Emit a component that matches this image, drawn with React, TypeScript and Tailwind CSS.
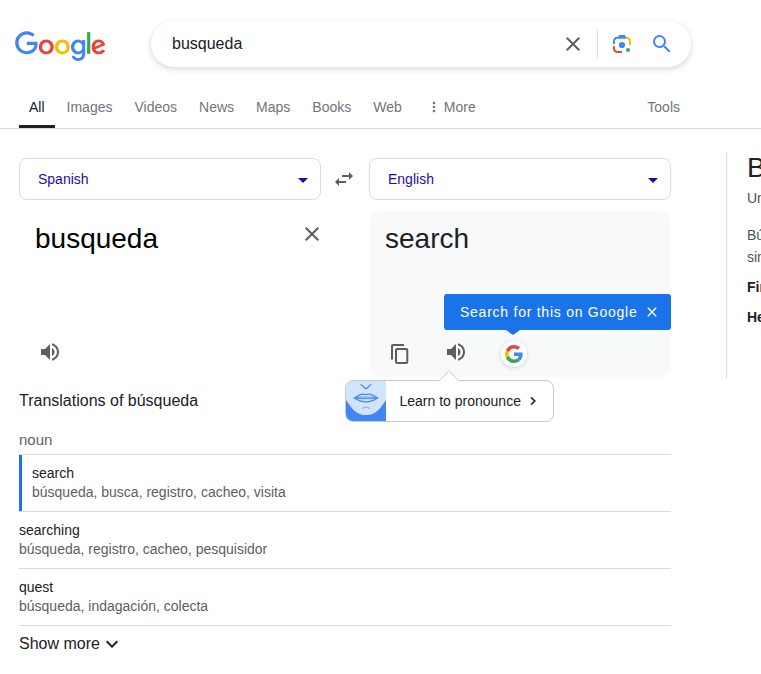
import React from "react";

function Icon({ d, size = 24, className = "" }: { d: string; size?: number; className?: string }) {
  return (
    <svg viewBox="0 0 24 24" width={size} height={size} fill="currentColor" className={`shrink-0 ${className}`}>
      <path d={d} />
    </svg>
  );
}

const CLOSE = "M19 6.41L17.59 5 12 10.59 6.41 5 5 6.41 10.59 12 5 17.59 6.41 19 12 13.41 17.59 19 19 17.59 13.41 12z";
const SEARCH =
  "M15.5 14h-.79l-.28-.27A6.471 6.471 0 0 0 16 9.5 6.5 6.5 0 1 0 9.5 16c1.61 0 3.09-.59 4.23-1.57l.27.28v.79l5 4.99L20.49 19l-4.99-5zm-6 0C7.01 14 5 11.99 5 9.5S7.01 5 9.5 5 14 7.01 14 9.5 11.99 14 9.5 14z";
const SWAP = "M6.99 11L3 15l3.99 4v-3H14v-2H6.99v-3zM21 9l-3.99-4v3H10v2h7.01v3L21 9z";
const VOLUME =
  "M3 9v6h4l5 5V4L7 9H3zm13.5 3c0-1.77-1.02-3.29-2.5-4.03v8.05c1.48-.73 2.5-2.25 2.5-4.02zM14 3.23v2.06c2.89.86 5 3.54 5 6.71s-2.11 5.85-5 6.71v2.06c4.01-.91 7-4.49 7-8.77s-2.99-7.86-7-8.77z";
const MORE =
  "M12 8c1.1 0 2-.9 2-2s-.9-2-2-2-2 .9-2 2 .9 2 2 2zm0 2c-1.1 0-2 .9-2 2s.9 2 2 2 2-.9 2-2-.9-2-2-2zm0 6c-1.1 0-2 .9-2 2s.9 2 2 2 2-.9 2-2-.9-2-2-2z";
const CHEVRON_RIGHT = "M10 6L8.59 7.41 13.17 12l-4.58 4.59L10 18l6-6z";
const CHEVRON_DOWN = "M7.41 8.59L12 13.17l4.59-4.58L18 10l-6 6-6-6z";

function GoogleLogo() {
  return (
    <svg viewBox="0 0 272 92" width={91} height={31} className="shrink-0">
      <path fill="#EA4335" d="M115.75 47.18c0 12.77-9.99 22.18-22.25 22.18s-22.25-9.41-22.25-22.18C71.25 34.32 81.24 25 93.5 25s22.25 9.32 22.25 22.18zm-9.74 0c0-7.98-5.79-13.44-12.51-13.44S80.99 39.2 80.99 47.18c0 7.9 5.79 13.44 12.51 13.44s12.51-5.55 12.51-13.44z" />
      <path fill="#FBBC05" d="M163.75 47.18c0 12.77-9.99 22.18-22.25 22.18s-22.25-9.41-22.25-22.18c0-12.85 9.99-22.18 22.25-22.18s22.25 9.32 22.25 22.18zm-9.74 0c0-7.98-5.79-13.44-12.51-13.44s-12.51 5.46-12.51 13.44c0 7.9 5.79 13.44 12.51 13.44s12.51-5.55 12.51-13.44z" />
      <path fill="#4285F4" d="M209.75 26.34v39.82c0 16.38-9.66 23.07-21.08 23.07-10.75 0-17.22-7.19-19.66-13.07l8.48-3.53c1.51 3.61 5.21 7.87 11.17 7.87 7.31 0 11.84-4.51 11.84-13v-3.19h-.34c-2.18 2.69-6.38 5.04-11.68 5.04-11.09 0-21.25-9.66-21.25-22.09 0-12.52 10.16-22.26 21.25-22.26 5.29 0 9.49 2.35 11.68 4.96h.34v-3.61h9.25zm-8.56 20.92c0-7.81-5.21-13.52-11.84-13.52-6.72 0-12.35 5.71-12.35 13.52 0 7.73 5.63 13.36 12.35 13.36 6.63 0 11.84-5.63 11.84-13.36z" />
      <path fill="#34A853" d="M225 3v65h-9.5V3h9.5z" />
      <path fill="#EA4335" d="M262.02 54.48l7.56 5.04c-2.44 3.61-8.32 9.83-18.48 9.83-12.6 0-22.01-9.74-22.01-22.18 0-13.19 9.49-22.18 20.92-22.18 11.51 0 17.14 9.16 18.98 14.11l1.01 2.52-29.65 12.28c2.27 4.45 5.8 6.72 10.75 6.72 4.96 0 8.4-2.44 10.92-6.14zm-23.27-7.98l19.82-8.23c-1.09-2.77-4.37-4.7-8.23-4.7-4.95 0-11.84 4.37-11.59 12.93z" />
      <path fill="#4285F4" d="M35.29 41.41V32h31.81c.31 1.64.47 3.58.47 5.68 0 7.06-1.93 15.79-8.15 22.01-6.05 6.3-13.78 9.66-24.02 9.66C16.32 69.35.36 53.89.36 34.91.36 15.93 16.32.47 35.3.47c10.5 0 17.98 4.12 23.6 9.49l-6.64 6.64c-4.03-3.78-9.49-6.72-16.97-6.72-13.86 0-24.7 11.17-24.7 25.03 0 13.86 10.84 25.03 24.7 25.03 8.99 0 14.11-3.61 17.39-6.89 2.66-2.66 4.41-6.46 5.1-11.65l-22.49.01z" />
    </svg>
  );
}

function GoogleG() {
  return (
    <svg viewBox="0 0 48 48" width={18} height={18}>
      <path fill="#EA4335" d="M24 9.5c3.54 0 6.71 1.22 9.21 3.6l6.85-6.85C35.9 2.38 30.47 0 24 0 14.62 0 6.51 5.38 2.56 13.22l7.98 6.19C12.43 13.72 17.74 9.5 24 9.5z" />
      <path fill="#4285F4" d="M46.98 24.55c0-1.57-.15-3.09-.38-4.55H24v9.02h12.94c-.58 2.96-2.26 5.48-4.78 7.18l7.73 6c4.51-4.18 7.09-10.36 7.09-17.65z" />
      <path fill="#FBBC05" d="M10.53 28.59c-.48-1.45-.76-2.99-.76-4.59s.27-3.14.76-4.59l-7.98-6.19C.92 16.46 0 20.12 0 24c0 3.88.92 7.54 2.56 10.78l7.97-6.19z" />
      <path fill="#34A853" d="M24 48c6.48 0 11.93-2.13 15.89-5.81l-7.73-6c-2.15 1.45-4.92 2.3-8.16 2.3-6.26 0-11.57-4.22-13.47-9.91l-7.98 6.19C6.51 42.62 14.62 48 24 48z" />
    </svg>
  );
}

function LensIcon() {
  return (
    <svg viewBox="0 0 24 24" width={24} height={24} fill="none" strokeWidth={2} className="shrink-0">
      <path stroke="#4285F4" d="M4 12V9.200A3.500 3.500 0 0 1 7.500 5.700H16" />
      <path fill="#4285F4" d="M7.500 6l1.700-3h5.600L16.500 6z" />
      <path stroke="#FBBC04" d="M16 5.700h.5A3.500 3.500 0 0 1 20 9.200V13" />
      <path stroke="#EA4335" d="M4 14.300v2.200A3.500 3.500 0 0 0 7.500 20H12" />
      <circle cx="12" cy="13" r="3.1" fill="#4285F4" />
      <circle cx="18" cy="18" r="2" fill="#34A853" />
    </svg>
  );
}

function CopyIcon({ className }: { className: string }) {
  return (
    <svg viewBox="0 0 24 24" width={24} height={24} fill="none" stroke="currentColor" strokeWidth={2} className={className}>
      <path d="M4 17.500V4a1 1 0 0 1 1-1H16" />
      <rect x="8" y="7" width="11.300" height="14" rx="1.2" />
    </svg>
  );
}

function Mouth() {
  return (
    <svg viewBox="0 0 40 40" width={40} height={40} fill="none" stroke="#4285F4" strokeWidth={1.2} className="shrink-0">
      <rect width="40" height="40" fill="#D2E3FC" stroke="none" />
      <path d="M0 19C5 26 9 34 20 34S35 26 40 19V40H0z" fill="#4285F4" stroke="none" />
      <path d="M14.500 3.500c2.600 0 3 4.200 5.500 4.200s2.900-4.200 5.500-4.200" />
      <path d="M8.500 17c3-2 6-3.900 8.500-3.900 1.200 0 1.800.400 3 .400s1.800-.400 3-.400c2.500 0 5.500 1.900 8.500 3.900-4 2.800-7 3.900-11.500 3.900S12.500 19.800 8.500 17z" />
      <path d="M8.500 17c4-.800 7-.900 11.500-.900s7.500.100 11.500.900c-4 .700-7 .700-11.500.700s-7.500 0-11.500-.700z" strokeWidth={0.9} />
      <path d="M16.500 27.500c2-1.800 5-1.800 7 0" stroke="#78A9F7" />
    </svg>
  );
}

function Select({ label }: { label: string }) {
  return (
    <div className="flex h-[42px] w-[302px] items-center justify-between rounded-lg border border-[#dadce0] pl-[18px] pr-3 text-sm text-[#1a0dab]">
      <span>{label}</span>
      <span className="mt-0.5 border-x-[5px] border-t-[5px] border-x-transparent border-t-[#1a0dab]" />
    </div>
  );
}

const tabs = ["All", "Images", "Videos", "News", "Maps", "Books", "Web"];
const entries = [
  { word: "search", synonyms: "búsqueda, busca, registro, cacheo, visita" },
  { word: "searching", synonyms: "búsqueda, registro, cacheo, pesquisidor" },
  { word: "quest", synonyms: "búsqueda, indagación, colecta" },
];

export default function App() {
  return (
    <div className="h-[674px] w-[761px] overflow-hidden bg-white font-['Liberation_Sans',Arial,sans-serif] text-[#202124]">
      <header className="flex h-[88px] items-start pl-[15px] pt-[21px]">
        <div className="mr-[45px] mt-2.5">
          <GoogleLogo />
        </div>
        <div className="flex h-[46px] w-[540px] items-center rounded-full bg-white pl-[21px] pr-[17px] shadow-[0_2px_5px_1px_rgba(64,60,67,0.16)]">
          <span className="grow text-base">busqueda</span>
          <Icon d={CLOSE} className="mr-3 text-[#5e5e5e]" />
          <span className="mr-3 h-7 w-px bg-[#dadce0]" />
          <LensIcon />
          <Icon d={SEARCH} className="ml-4 text-[#4285f4]" />
        </div>
      </header>

      <nav className="flex h-[41px] gap-0.5 border-b border-[#dadce0] pl-[19px] text-sm text-[#70757a]">
        {tabs.map((tab, i) => (
          <div
            key={tab}
            className={
              i === 0
                ? "flex items-center border-b-[3px] border-[#202124] px-2.5 text-[#202124]"
                : "flex items-center border-b-[3px] border-transparent px-2.5"
            }
          >
            {tab}
          </div>
        ))}
        <div className="ml-3 flex items-center border-b-[3px] border-transparent">
          <Icon d={MORE} size={16} className="mr-0.5" />
          More
        </div>
        <div className="ml-auto mr-[81px] flex items-center border-b-[3px] border-transparent">Tools</div>
      </nav>

      <div className="flex">
        <main className="ml-[19px] w-[652px] shrink-0 pt-[29px]">
          <div className="flex items-center justify-between">
            <Select label="Spanish" />
            <Icon d={SWAP} className="-ml-0.5 text-[#5e5e5e]" />
            <Select label="English" />
          </div>

          <div className="mt-[11px] flex h-[166px] justify-between text-[#5e5e5e]">
            <section className="flex w-[302px] flex-col justify-between pb-[13px] pl-4 pt-[11px]">
              <div className="flex items-start justify-between">
                <span className="text-[28px] leading-[34px] text-black">busqueda</span>
                <Icon d={CLOSE} className="-mr-[3px]" />
              </div>
              <Icon d={VOLUME} className="ml-[3px]" />
            </section>
            <section className="relative w-[302px] rounded-xl bg-[#f8f9fb] pl-4 pt-[11px]">
              <div className="text-[28px] leading-[34px] text-[#202124]">search</div>
              <div className="mt-[84px] flex items-start">
                <CopyIcon className="ml-[3px] mt-0.5 shrink-0" />
                <Icon d={VOLUME} className="ml-8" />
                <div className="ml-[33px] mt-px flex h-[26px] w-[26px] items-center justify-center rounded-full bg-white shadow-[0_1px_4px_rgba(60,64,67,0.2)]">
                  <GoogleG />
                </div>
              </div>
              <div className="absolute right-0 top-[83px] flex h-9 w-[227px] items-center rounded-[3px] bg-[#1a73e8] pl-4 text-sm text-white">
                <span className="whitespace-nowrap tracking-[0.75px]">Search for this on Google</span>
                <Icon d={CLOSE} size={16} className="absolute right-[11px]" />
                <span className="absolute left-[62px] top-full border-x-[7px] border-t-[5px] border-x-transparent border-t-[#1a73e8]" />
              </div>
              <div className="absolute -left-6 top-[169px] z-10 flex h-[42px] w-[209px] items-center rounded-lg border border-[#c8c9cb] bg-white text-sm text-[#202124]">
                <div className="overflow-hidden rounded-l-[7px]">
                  <Mouth />
                </div>
                <span className="ml-[13.5px] whitespace-nowrap">Learn to pronounce</span>
                <Icon d={CHEVRON_RIGHT} size={16} className="ml-1 stroke-current stroke-[0.6]" />
                <svg width="20" height="11" viewBox="0 0 20 11" className="absolute -top-[11px] left-[93px]">
                  <path d="M0.500 10.500L10 .8l9.500 9.700V11H.500z" fill="#fff" />
                  <path d="M.5 10.500L10 .8l9.500 9.700" fill="none" stroke="#c8c9cb" />
                </svg>
              </div>
            </section>
          </div>

          <h2 className="mt-3 text-base">Translations of búsqueda</h2>
          <div className="mt-4 h-[25px] text-[15px] leading-[22px] text-[#636363]">noun</div>
          {entries.map((entry, i) => (
            <div
              key={entry.word}
              className="flex h-[57px] border-t border-[#dadce0] text-sm leading-[19px]"
            >
              {i === 0 && <span className="mr-2.5 w-[3px] bg-[#1a73e8]" />}
              <div className="pt-[9px]">
                <div>{entry.word}</div>
                <div className="text-[#5e5e5e]">{entry.synonyms}</div>
              </div>
            </div>
          ))}
          <div className="flex items-center border-t border-[#dadce0] pt-1.5 text-base">
            Show more
            <Icon d={CHEVRON_DOWN} />
          </div>
        </main>

        <aside className="ml-[55px] mt-[23px] h-[227px] shrink-0 whitespace-nowrap border-l border-[#dadce0] pl-5 text-sm leading-[22px] text-[#4d5156]">
          <div className="text-[28px] leading-8 text-[#202124]">Búsqueda</div>
          <div className="mt-[3px]">Un</div>
          <div className="mt-[15px]">Bú</div>
          <div>sin</div>
          <div className="mt-2 font-bold text-[#202124]">Fin</div>
          <div className="mt-2 font-bold text-[#202124]">He</div>
        </aside>
      </div>
    </div>
  );
}
